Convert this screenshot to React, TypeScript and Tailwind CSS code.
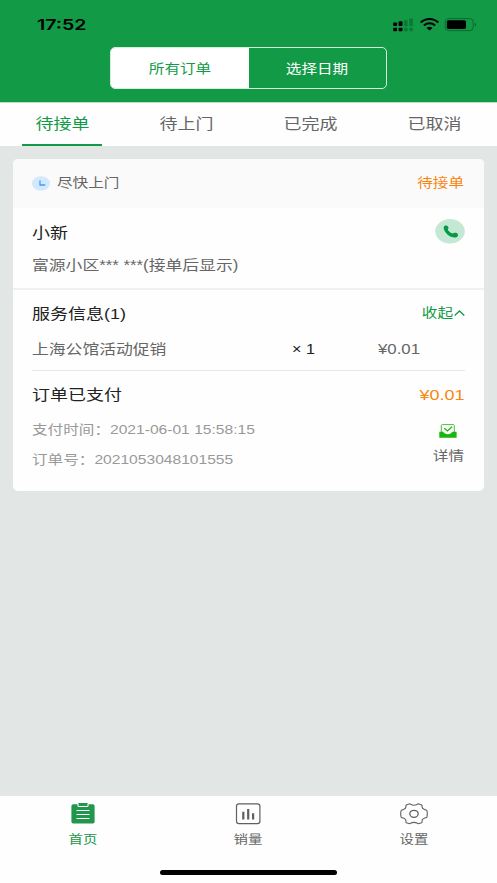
import type { ReactNode } from 'react';
import { clsx } from 'clsx';

const TABS = ['待接单', '待上门', '已完成', '已取消'];

interface WideProps {
  children: ReactNode;
  className?: string;
}

// Text is set slightly expanded across the whole app
function Wide({ children, className }: WideProps) {
  return (
    <span className={clsx('inline-block whitespace-pre', className, !className?.includes('scale-x') && 'scale-x-[1.2]')}>
      {children}
    </span>
  );
}

function StatusIcons() {
  return (
    <svg width="86" height="16" viewBox="0 0 86 16">
      <g fill="#000">
        <rect x="0.2" y="5.4" width="3.9" height="3.6" rx="0.8" />
        <rect x="5.6" y="4.2" width="3.9" height="4.8" rx="0.8" />
        <rect x="0.2" y="10.8" width="3.9" height="3.4" rx="0.8" />
        <rect x="5.6" y="10.8" width="3.9" height="3.4" rx="0.8" />
      </g>
      <g fill="#0b7a34">
        <rect x="11" y="3" width="3.6" height="6.2" rx="0.8" />
        <rect x="16.3" y="1.4" width="3.6" height="7.8" rx="0.8" />
        <rect x="11" y="10.8" width="3.6" height="3.4" rx="0.8" />
        <rect x="16.3" y="10.8" width="3.6" height="3.4" rx="0.8" />
      </g>
      <g fill="none" stroke="#000" strokeWidth="2">
        <path d="M27.7 5.5C32.7 .8 40.3 .8 45.3 5.5" />
        <path d="M30.9 8.5c3.2-2.9 8-2.9 11.2 0" />
      </g>
      <path d="M33.6 10.9c1.7-1.4 4.1-1.4 5.8 0L36.5 13.4z" fill="#000" />
      <rect x="52.2" y="1.6" width="28" height="12" rx="3.4" fill="none" stroke="#0b6b2e" />
      <rect x="53.8" y="3.3" width="19.2" height="8.6" rx="1.6" fill="#000" />
      <path d="M81.8 5.8c1.6.6 1.6 3.2 0 3.8z" fill="#0b5a28" />
    </svg>
  );
}

function PhoneIcon() {
  return (
    <svg width="30" height="25" viewBox="0 0 30 25">
      <ellipse cx="15" cy="12.3" rx="14.8" ry="12.2" fill="#c5e8d5" />
      <path
        d="M8.700 8.300C8.900 6.800 10.700 6.300 12 6.800c1.200.5 1.800 1.800 1.300 2.900-.3.800-.7 1-.1 1.800.9 1.200 2.200 2.200 3.700 2.800.9.3 1.200 0 2-.3 1.300-.4 3.200-.1 3.800.9.700 1.200.1 2.800-1.300 3.300-2.800.8-6.500-.6-9-2.800C9.900 13.200 8.400 10.500 8.700 8.300z"
        fill="#079a46"
      />
    </svg>
  );
}

function ClockIcon() {
  return (
    <svg width="18" height="15" viewBox="0 0 18 15">
      <ellipse cx="9" cy="7.5" rx="9" ry="7.3" fill="#d3e8fd" />
      <path d="M8 4.600v4.400h5.200" fill="none" stroke="#3b9cf8" strokeWidth="1.300" />
    </svg>
  );
}

function DetailIcon() {
  return (
    <svg width="18" height="14" viewBox="0 0 18 14">
      <path d="M2.300 8V1.500q0-.9 1-.9h11q1 0 1 .9V8" fill="none" stroke="#45c43c" strokeWidth="1" />
      <path d="M.3 7.800h4c1.200 3.200 7.800 3.200 9 0h4.300v6H.3z" fill="#18b60e" />
      <path d="M5.300 4.300l3.100 2.700 4.700-4.300" fill="none" stroke="#18b60e" strokeWidth="1.200" />
    </svg>
  );
}

function HomeIcon() {
  return (
    <svg width="24" height="22" viewBox="0 0 24 22">
      <rect x="0.400" y="1.200" width="23.200" height="19.400" rx="1.800" fill="#20974a" />
      <path d="M7 .5v2.300q0 .7 1 .7h8q1 0 1-.7V.5" fill="#20974a" stroke="#fff" strokeWidth="1.100" />
      <path d="M7.600 0h8.800v1.200H7.600z" fill="#20974a" />
      <path d="M5.500 7.500h13M5.500 11.500h13M5.500 15.500h13" stroke="#fff" strokeWidth="1.100" />
    </svg>
  );
}

function ChartIcon() {
  return (
    <svg width="26" height="22" viewBox="0 0 26 22" fill="none" stroke="#606060">
      <rect x="1.500" y="0.900" width="23.400" height="19.700" rx="2.400" strokeWidth="1.200" />
      <path d="M8.300 8.700v7.800M13.200 6v10.500M18.100 10.300v6.200" strokeWidth="2.200" />
    </svg>
  );
}

function GearIcon() {
  return (
    <svg width="28" height="22" viewBox="0 0 28 22" fill="none" stroke="#606060" strokeWidth="1.100">
      <path d="M9.700.8Q10.400.9 10.900 1.500Q14 3 17.100 1.500Q17.600.9 18.300.8L21.700 1.900Q22.300 2.300 22 3.200Q21.700 5.400 24.600 6.600Q26.500 6.700 26.900 7.600Q27.700 10.800 26.900 14Q26.500 14.900 24.600 15Q21.700 16.200 22 18.400Q22.300 19.300 21.700 19.700L18.300 20.800Q17.600 20.700 17.100 20.100Q14 18.600 10.900 20.100Q10.400 20.700 9.700 20.800L6.300 19.700Q5.700 19.300 6 18.400Q6.300 16.200 3.400 15Q1.500 14.900 1.100 14Q.3 10.800 1.100 7.600Q1.500 6.700 3.400 6.600Q6.300 5.400 6 3.200Q5.700 2.300 6.300 1.900Z" />
      <ellipse cx="14" cy="10.800" rx="4.200" ry="3.500" strokeWidth="1.300" />
    </svg>
  );
}

const NAV_ITEMS = [
  { label: '首页', icon: <HomeIcon />, active: true },
  { label: '销量', icon: <ChartIcon />, active: false },
  { label: '设置', icon: <GearIcon />, active: false },
];

export default function App() {
  return (
    <div className="flex h-[883px] w-[497px] flex-col overflow-hidden bg-[#e2e6e5] font-['Liberation_Sans','Noto_Sans_CJK_SC',sans-serif]">
      {/* Header */}
      <header className="h-[102px] shrink-0 bg-[#129a47]">
        <div className="flex h-[47px] items-start justify-between pt-[15px] pr-[18px] pl-[37px]">
          <Wide className="origin-left scale-x-[1.3] font-['Inter',sans-serif] text-[15px] leading-[20px] font-semibold text-black">
            17:52
          </Wide>
          <div className="pt-[2px]">
            <StatusIcons />
          </div>
        </div>
        <div className="ml-[110px] grid h-[42px] w-[277px] grid-cols-2 overflow-hidden rounded-[5px] border border-[#d5eedd] text-[13px] leading-[41px]">
          <div className="bg-white text-center text-[#129a47]">
            <Wide>所有订单</Wide>
          </div>
          <div className="text-center text-white">
            <Wide>选择日期</Wide>
          </div>
        </div>
      </header>

      {/* Order status tabs */}
      <nav className="grid h-[44px] shrink-0 grid-cols-4 border-t border-[#b9dfc8] bg-[#fefefe] text-[15px] text-[#666]">
        {TABS.map((tab, i) => (
          <div key={tab} className="flex flex-col items-center justify-between">
            <Wide className={clsx('pt-[1px] leading-[40px]', i === 0 && 'text-[#129a47]')}>{tab}</Wide>
            {i === 0 && <div className="h-[2px] w-[80px] shrink-0 bg-[#129a47]" />}
          </div>
        ))}
      </nav>

      {/* Order card */}
      <main className="flex-1 pt-[13px] pr-[13px] pl-[13px]">
        <div className="h-[332px] overflow-hidden rounded-[5px] bg-[#fefefe]">
          <div className="flex h-[49px] items-center bg-[#fafafa] pr-[20px] pb-[1px] pl-[19px] text-[13px]">
            <ClockIcon />
            <Wide className="ml-[7px] origin-left text-[#666]">尽快上门</Wide>
            <Wide className="ml-auto origin-right text-[#f98511]">待接单</Wide>
          </div>

          <section className="flex h-[82px] justify-between border-b-2 border-[#eff0f0] px-[19px]">
            <div className="flex flex-col">
              <Wide className="mt-[13px] origin-left text-[15px] leading-[24px] text-[#222]">小新</Wide>
              <Wide className="mt-[8px] origin-left text-[14px] leading-[24px] text-[#666]">
                富源小区*** ***(接单后显示)
              </Wide>
            </div>
            <div className="pt-[11px]">
              <PhoneIcon />
            </div>
          </section>

          <section className="mx-[19px] h-[81px] border-b border-[#e6e8e8]">
            <div className="flex h-[47px] items-center">
              <Wide className="origin-left pt-[2px] text-[15px] text-[#222]">服务信息(1)</Wide>
              <div className="ml-auto flex items-center pb-[1px] text-[13px] text-[#129a47]">
                <Wide className="mr-[1px] origin-right">收起</Wide>
                <svg width="11" height="7" viewBox="0 0 11 7" fill="none" stroke="#129a47" strokeWidth="1.300">
                  <path d="M.7 5.500l4.800-4.500L10.300 5.500" />
                </svg>
              </div>
            </div>
            <div className="grid grid-cols-[260px_86px_1fr] text-[14px] leading-[24px]">
              <Wide className="w-fit origin-left text-[#666]">上海公馆活动促销</Wide>
              <Wide className="w-fit origin-left scale-x-[1.15] text-[#222]">× 1</Wide>
              <Wide className="w-fit origin-left text-[#666]">¥0.01</Wide>
            </div>
          </section>

          <section className="flex justify-between px-[19px] pt-[11px]">
            <div className="flex flex-col text-[13px] text-[#999]">
              <Wide className="origin-left text-[15px] leading-[26px] text-[#222]">订单已支付</Wide>
              <Wide className="mt-[10px] origin-left leading-[24px]">支付时间：2021-06-01 15:58:15</Wide>
              <Wide className="mt-[6px] origin-left leading-[24px]">订单号：2021053048101555</Wide>
            </div>
            <div className="flex flex-col items-end">
              <Wide className="origin-right text-[15px] leading-[26px] text-[#f98511]">¥0.01</Wide>
              <div className="mt-[16px] mr-[8px]">
                <DetailIcon />
              </div>
              <Wide className="mt-[6px] mr-[1px] origin-right text-[13px] leading-[24px] text-[#666]">详情</Wide>
            </div>
          </section>
        </div>
      </main>

      {/* Bottom navigation */}
      <footer className="h-[87px] shrink-0 bg-[#fefefe]">
        <div className="grid h-[74px] grid-cols-3 pt-[7px] text-[12px]">
          {NAV_ITEMS.map((item) => (
            <div
              key={item.label}
              className={clsx('flex flex-col items-center', item.active ? 'text-[#20974a]' : 'text-[#666]')}
            >
              {item.icon}
              <Wide className="mt-[3px] leading-[24px]">{item.label}</Wide>
            </div>
          ))}
        </div>
        <div className="mx-auto h-[5px] w-[177px] rounded-full bg-black" />
      </footer>
    </div>
  );
}
